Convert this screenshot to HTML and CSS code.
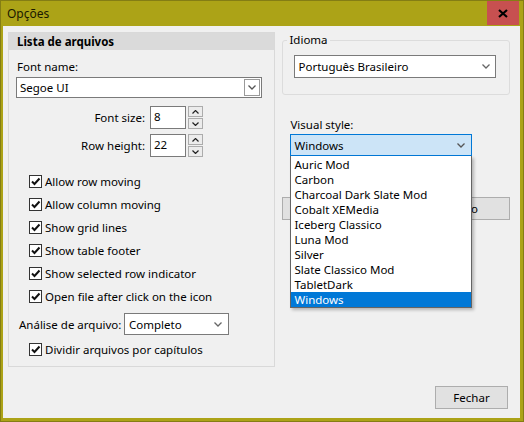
FILE: index.html
```html
<!DOCTYPE html>
<html lang="pt-BR">
<head>
<meta charset="utf-8">
<title>Opções</title>
<link rel="stylesheet" href="styles.css">
</head>
<body>
<div class="window">
  <div class="titlebar">
    <span class="title">Opções</span>
    <div class="close">
      <svg width="10" height="9" viewBox="0 0 10 9"><path d="M1 1 L9 8 M9 1 L1 8" stroke="#000" stroke-width="2.2" fill="none"/></svg>
    </div>
  </div>
  <div class="client">
    <div class="main">
      <div class="panel">
        <div class="panel-head">Lista de arquivos</div>
        <div class="panel-body">
          <div class="label">Font name:</div>
          <div class="combo">
            <span class="combo-text">Segoe UI</span>
            <span class="combo-btn"><svg width="8" height="5" viewBox="0 0 8 5"><path d="M0.5 0.5 L4 4 L7.5 0.5" stroke="#555" stroke-width="1.3" fill="none"/></svg></span>
          </div>
          <div class="spin-row first">
            <span class="spin-label">Font size:</span>
            <span class="spin-input">8</span>
            <span class="spin-btns">
              <span class="spin-btn"><svg width="7" height="4" viewBox="0 0 7 4"><path d="M0.5 3.5 L3.5 0.5 L6.5 3.5" stroke="#222" stroke-width="1.2" fill="none"/></svg></span>
              <span class="spin-btn"><svg width="7" height="4" viewBox="0 0 7 4"><path d="M0.5 0.5 L3.5 3.5 L6.5 0.5" stroke="#222" stroke-width="1.2" fill="none"/></svg></span>
            </span>
          </div>
          <div class="spin-row">
            <span class="spin-label">Row height:</span>
            <span class="spin-input">22</span>
            <span class="spin-btns">
              <span class="spin-btn"><svg width="7" height="4" viewBox="0 0 7 4"><path d="M0.5 3.5 L3.5 0.5 L6.5 3.5" stroke="#222" stroke-width="1.2" fill="none"/></svg></span>
              <span class="spin-btn"><svg width="7" height="4" viewBox="0 0 7 4"><path d="M0.5 0.5 L3.5 3.5 L6.5 0.5" stroke="#222" stroke-width="1.2" fill="none"/></svg></span>
            </span>
          </div>
          <div class="checks">
            <div class="check"><span class="box"><svg width="11" height="11" viewBox="0 0 11 11"><path d="M2 5.5 L4.5 8 L9.5 2.5" stroke="#111" stroke-width="2" fill="none"/></svg></span>Allow row moving</div>
            <div class="check"><span class="box"><svg width="11" height="11" viewBox="0 0 11 11"><path d="M2 5.5 L4.5 8 L9.5 2.5" stroke="#111" stroke-width="2" fill="none"/></svg></span>Allow column moving</div>
            <div class="check"><span class="box"><svg width="11" height="11" viewBox="0 0 11 11"><path d="M2 5.5 L4.5 8 L9.5 2.5" stroke="#111" stroke-width="2" fill="none"/></svg></span>Show grid lines</div>
            <div class="check"><span class="box"><svg width="11" height="11" viewBox="0 0 11 11"><path d="M2 5.5 L4.5 8 L9.5 2.5" stroke="#111" stroke-width="2" fill="none"/></svg></span>Show table footer</div>
            <div class="check"><span class="box"><svg width="11" height="11" viewBox="0 0 11 11"><path d="M2 5.5 L4.5 8 L9.5 2.5" stroke="#111" stroke-width="2" fill="none"/></svg></span>Show selected row indicator</div>
            <div class="check"><span class="box"><svg width="11" height="11" viewBox="0 0 11 11"><path d="M2 5.5 L4.5 8 L9.5 2.5" stroke="#111" stroke-width="2" fill="none"/></svg></span>Open file after click on the icon</div>
          </div>
          <div class="analise">
            <span class="analise-label">Análise de arquivo:</span>
            <div class="select small">
              <span class="select-text">Completo</span>
              <svg width="8" height="5" viewBox="0 0 8 5"><path d="M0.5 0.5 L4 4 L7.5 0.5" stroke="#666" stroke-width="1.3" fill="none"/></svg>
            </div>
          </div>
          <div class="check last"><span class="box"><svg width="11" height="11" viewBox="0 0 11 11"><path d="M2 5.5 L4.5 8 L9.5 2.5" stroke="#111" stroke-width="2" fill="none"/></svg></span>Dividir arquivos por capítulos</div>
        </div>
      </div>
      <div class="right">
        <fieldset class="group">
          <legend>Idioma</legend>
          <div class="group-body">
            <div class="select lang">
              <span class="select-text">Português Brasileiro</span>
              <svg width="8" height="5" viewBox="0 0 8 5"><path d="M0.5 0.5 L4 4 L7.5 0.5" stroke="#666" stroke-width="1.3" fill="none"/></svg>
            </div>
          </div>
        </fieldset>
        <div class="vs-label">Visual style:</div>
        <div class="vs-wrap">
          <div class="select vs">
            <span class="select-text">Windows</span>
            <svg width="8" height="5" viewBox="0 0 8 5"><path d="M0.5 0.5 L4 4 L7.5 0.5" stroke="#555" stroke-width="1.3" fill="none"/></svg>
          </div>
          <ul class="dropdown">
            <li>Auric Mod</li>
            <li>Carbon</li>
            <li>Charcoal Dark Slate Mod</li>
            <li>Cobalt XEMedia</li>
            <li>Iceberg Classico</li>
            <li>Luna Mod</li>
            <li>Silver</li>
            <li>Slate Classico Mod</li>
            <li>TabletDark</li>
            <li class="sel">Windows</li>
          </ul>
        </div>
        <div class="btn wide"><span class="hidden-label">Restaurar estilo padrão</span></div>
      </div>
    </div>
    <div class="footer">
      <div class="btn close-btn">Fechar</div>
    </div>
  </div>
</div>
</body>
</html>
```

FILE: styles.css
```css
* { box-sizing: border-box; }
html, body { margin: 0; padding: 0; }
body {
  font-family: "Noto Sans", "Segoe UI", sans-serif;
  font-size: 11.5px;
  color: #000;
  width: 524px;
  height: 422px;
  overflow: hidden;
}
.window {
  width: 524px;
  height: 422px;
  background: #aca317;
  border: 1px solid #847d14;
  padding: 0 3px 3px 2px;
  display: flex;
  flex-direction: column;
}
.titlebar {
  height: 25px;
  display: flex;
  align-items: center;
  justify-content: space-between;
}
.title {
  padding-left: 4px;
  font-size: 12px;
  color: #1a1a00;
}
.close {
  align-self: flex-start;
  width: 32px;
  height: 24px;
  margin-right: 1px;
  background: #c75050;
  display: flex;
  align-items: center;
  justify-content: center;
}
.client {
  flex: 1;
  background: #f0f0f0;
  padding: 6px 10px 9px 5px;
  display: flex;
  flex-direction: column;
}
.main {
  display: flex;
  gap: 7px;
}
.panel {
  width: 268px;
  height: 335px;
  border: 1px solid #d9d9d9;
}
.panel-head {
  height: 17px;
  line-height: 17px;
  background: #dadada;
  padding-left: 8px;
  font-weight: bold;
}
.panel-body {
  padding: 0 12px 0 7px;
}
.label {
  margin-top: 9px;
  line-height: 16px;
  padding-left: 1px;
}
.combo {
  margin-top: 2px;
  height: 21px;
  border: 1px solid #7a7a7a;
  background: #fff;
  display: flex;
  align-items: center;
  justify-content: space-between;
}
.combo-text { padding-left: 3px; }
.combo-btn {
  width: 16px;
  height: 17px;
  margin-right: 1px;
  border: 1px solid #9a9a9a;
  display: flex;
  align-items: center;
  justify-content: center;
}
.spin-row {
  display: flex;
  align-items: center;
  margin-top: 5px;
  height: 23px;
}
.spin-row.first { margin-top: 8px; }
.spin-label {
  width: 129px;
  text-align: right;
  margin-right: 5px;
}
.spin-input {
  width: 36px;
  height: 23px;
  border: 1px solid #7a7a7a;
  background: #fff;
  padding-left: 3px;
  line-height: 19px;
}
.spin-btns {
  margin-left: 2px;
  display: flex;
  flex-direction: column;
  gap: 1px;
  height: 23px;
}
.spin-btn {
  width: 15px;
  height: 11px;
  border: 1px solid #acacac;
  background: #ececec;
  display: flex;
  align-items: center;
  justify-content: center;
}
.checks {
  margin-top: 13px;
  padding-left: 13px;
}
.check {
  display: flex;
  align-items: center;
  height: 23px;
  white-space: nowrap;
}
.check.last {
  padding-left: 13px;
  margin-top: 3px;
}
.box {
  width: 13px;
  height: 13px;
  border: 1px solid #333;
  background: #fff;
  margin-right: 3px;
  display: flex;
  align-items: center;
  justify-content: center;
}
.analise {
  margin-top: 5px;
  display: flex;
  align-items: center;
  padding-left: 3px;
}
.analise-label {
  width: 105px;
  white-space: nowrap;
}
.select {
  height: 22px;
  border: 1px solid #7a7a7a;
  background: #fff;
  display: flex;
  align-items: center;
  justify-content: space-between;
  padding: 0 6px 0 4px;
  white-space: nowrap;
}
.select.small { width: 105px; }
.right {
  width: 228px;
  display: flex;
  flex-direction: column;
}
.group {
  margin: 0;
  padding: 0;
  border: 1px solid #dcdcdc;
  border-radius: 3px;
}
.group legend {
  margin-left: 4px;
  padding: 0 2px;
  line-height: 16px;
}
.group-body {
  padding: 7px 13px 16px 11px;
}
.select.lang { height: 23px; padding-left: 3px; padding-right: 5px; }
.vs-label {
  margin-top: 22px;
  padding-left: 8px;
  line-height: 16px;
}
.vs-wrap {
  position: relative;
  margin-top: 1px;
  margin-left: 8px;
  width: 182px;
}
.select.vs {
  background: #cce4f7;
  border-color: #0078d7;
  padding-left: 3px;
}
.dropdown {
  position: absolute;
  top: 100%;
  left: 0;
  width: 182px;
  margin: 0;
  padding: 0;
  list-style: none;
  background: #fff;
  border: 1px solid #646464;
  border-top: none;
  box-shadow: 2px 2px 3px rgba(0, 0, 0, 0.25);
  z-index: 5;
}
.dropdown li {
  height: 15px;
  line-height: 15px;
  padding-left: 3px;
  white-space: nowrap;
}
.dropdown li:first-child { margin-top: 1px; }
.dropdown li.sel {
  background: #0078d7;
  color: #fff;
}
.btn {
  height: 23px;
  border: 1px solid #adadad;
  background: #e1e1e1;
  display: flex;
  align-items: center;
  justify-content: center;
  white-space: nowrap;
  overflow: hidden;
}
.btn.wide {
  margin-top: 41px;
  justify-content: flex-end;
  padding-right: 31px;
}
.footer {
  margin-top: auto;
  display: flex;
  justify-content: flex-end;
}
.close-btn {
  width: 73px;
  margin-right: 2px;
}
```
